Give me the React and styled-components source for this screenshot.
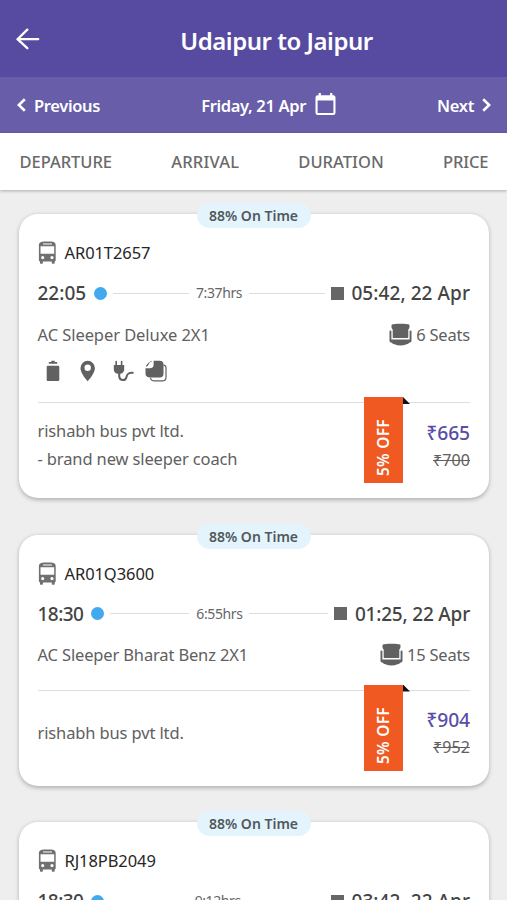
import React from "react";
import styled, { createGlobalStyle } from "styled-components";

const Global = createGlobalStyle`
  * { box-sizing: border-box; }
  html, body { margin: 0; background: #eeeeee; }
  body { font-family: "Noto Sans", "Open Sans", sans-serif; color: #606060; overflow: hidden; }
  svg { display: block; flex: none; }
`;

const Screen = styled.div`
  width: 100%;
  height: 900px;
  overflow: hidden;
  display: flex;
  flex-direction: column;
  background: #eeeeee;
`;

const Header = styled.header`
  flex: none;
  height: 77px;
  padding: 6px 17px 0 16px;
  display: grid;
  grid-template-columns: 24px 1fr;
  align-items: center;
  background: #564ba0;
  color: #fff;
`;

const BackButton = styled.button`
  width: 24px;
  height: 24px;
  margin-top: -6px;
  padding: 0;
  border: 0;
  background: none;
  color: inherit;
`;

const Title = styled.h1`
  margin: 0;
  padding: 0 0 1px 23px;
  text-align: center;
  font-size: 24px;
  font-weight: 600;
  line-height: 34px;
  letter-spacing: -0.48px;
`;

const DateBar = styled.nav`
  flex: none;
  height: 56px;
  padding: 0 16px 0 17px;
  display: flex;
  align-items: center;
  justify-content: space-between;
  background: #675da8;
  color: #fff;
  font-size: 16.5px;
  font-weight: 600;
  letter-spacing: -0.35px;
`;

const DateItem = styled.div`
  display: flex;
  align-items: center;
  gap: ${(p) => p.$gap}px;
  white-space: nowrap;
`;

const SortTabs = styled.nav`
  flex: none;
  height: 57px;
  padding: 0 18.5px 0 19.5px;
  display: flex;
  align-items: center;
  justify-content: space-between;
  background: #fff;
  box-shadow: 0 1px 3px rgba(0, 0, 0, 0.28);
  color: #6a6a6a;
`;

const SortTab = styled.span`
  font-size: 16.5px;
  font-weight: 500;
  letter-spacing: ${(p) => p.$tracking}px;
`;

const Results = styled.main`
  padding: 24px 18.5px 0;
  display: flex;
  flex-direction: column;
  gap: 36.5px;
`;

const Card = styled.article`
  position: relative;
  flex: none;
  padding: 26px 18.5px 0 19px;
  border-radius: 19px;
  background: #fff;
  box-shadow: 0 1.5px 4px rgba(0, 0, 0, 0.26);
`;

const OnTime = styled.span`
  position: absolute;
  top: -11px;
  left: 50%;
  transform: translateX(-50%);
  width: 114px;
  height: 25px;
  border-radius: 13px;
  background: #e4f4fd;
  color: #51585c;
  text-align: center;
  font-size: 14px;
  font-weight: 600;
  line-height: 26px;
`;

const Row = styled.div`
  display: flex;
  align-items: center;
  justify-content: space-between;
  white-space: nowrap;
`;

const BusRow = styled(Row)`
  height: 25px;
  justify-content: flex-start;
  gap: 8px;
  color: #262626;
  font-size: 16.5px;
  letter-spacing: -0.08px;
`;

const TimeRow = styled(Row)`
  height: 30px;
  margin-top: 13px;
`;

const Time = styled.span`
  color: #444;
  font-size: 19px;
  font-weight: 500;
  letter-spacing: ${(p) => p.$tracking}px;
`;

const StartDot = styled.i`
  flex: none;
  width: 13px;
  height: 13px;
  margin: 0 6px 0 8px;
  border-radius: 50%;
  background: #42a9ee;
`;

const EndSquare = styled.i`
  flex: none;
  width: 13px;
  height: 13px;
  margin: 0 7.5px 0 6px;
  background: #666;
`;

const Line = styled.i`
  flex: 1;
  height: 1px;
  background: #dedede;
`;

const Duration = styled.span`
  margin: -1px 7px 0 7px;
  font-size: 14px;
  letter-spacing: -0.4px;
  color: #666;
`;

const ClassRow = styled(Row)`
  height: 26px;
  margin-top: 13px;
  font-size: 16.5px;
`;

const ClassName = styled.span`
  letter-spacing: ${(p) => p.$tracking}px;
`;

const Seats = styled.span`
  display: flex;
  align-items: center;
  gap: 4px;
  letter-spacing: -0.2px;
`;

const Amenities = styled.div`
  height: 24px;
  margin-top: 12px;
  padding-left: 8px;
  display: flex;
  align-items: center;
  color: #616161;
`;

const AmenitySlot = styled.span`
  width: ${(p) => p.$w}px;
`;

const Footer = styled.footer`
  position: relative;
  height: 96px;
  margin-top: ${(p) => (p.$afterAmenities ? 19 : 22)}px;
  padding-bottom: 10px;
  display: flex;
  align-items: center;
  justify-content: space-between;
  border-top: 1px solid #dedede;
`;

const Operator = styled.div`
  margin-top: -1px;
  font-size: 16.5px;
  line-height: 28px;
  letter-spacing: -0.13px;
  white-space: pre-line;
`;

const Prices = styled.div`
  display: flex;
  flex-direction: column;
  align-items: flex-end;
  margin-top: 1px;
`;

const Price = styled.span`
  color: #594ea5;
  font-size: 19.3px;
  font-weight: 500;
  line-height: 28px;
  letter-spacing: -0.1px;
`;

const OldPrice = styled.span`
  font-size: 16px;
  line-height: 27px;
  letter-spacing: 0.1px;
  text-decoration: line-through;
`;

const Ribbon = styled.div`
  position: absolute;
  top: -6px;
  right: 67px;
  width: 39px;
  height: 86px;
  padding-top: 7px;
  display: flex;
  align-items: center;
  justify-content: flex-start;
  writing-mode: vertical-rl;
  transform: rotate(180deg);
  background: #f05a22;
  color: #fff;
  font-size: 15.5px;
  font-weight: 600;
  line-height: 39px;
  letter-spacing: 0.25px;
`;

const Fold = styled.i`
  position: absolute;
  top: -6px;
  right: 60px;
  width: 7px;
  height: 7px;
  background: #111;
  clip-path: polygon(0 0, 100% 100%, 0 100%);
`;

const BackArrow = () => (
  <svg width="24" height="24" viewBox="0 0 24 24" fill="none" stroke="currentColor" strokeWidth="2.3" strokeLinecap="round" strokeLinejoin="round">
    <path d="M22.200 12.200H1.600M11.300 2.600 1.500 12.200l9.800 9" />
  </svg>
);

const Chevron = ({ right }) => (
  <svg width="9" height="14" viewBox="0 0 9 14" fill="none" stroke="currentColor" strokeWidth="2.6">
    <path d={right ? "M1.2 1.2 7.2 7l-6 5.8" : "M7.8 1.2 1.8 7l6 5.8"} />
  </svg>
);

const Calendar = () => (
  <svg width="21" height="26" viewBox="0 0 21 26">
    <path fill="currentColor" fillRule="evenodd" d="M3.600 1h2.300v2.200h9.200V1h2.300v2.200h.9A2.200 2.200 0 0 1 20.500 5.400v15.400a2.200 2.200 0 0 1-2.200 2.200H2.700A2.200 2.200 0 0 1 .5 20.800V5.400a2.200 2.200 0 0 1 2.200-2.200h.9zM2.600 8.400v12.600h15.800V8.400z" />
  </svg>
);

const Bus = () => (
  <svg width="19" height="23" viewBox="0 0 19 23">
    <path fill="#707070" fillRule="evenodd" d="M.9 4.200C.9 1 4 .6 9.500.6s8.200.4 8.200 3.600v14.700c0 .8-.4 1.200-1 1.500v1.400c0 .6-.4 1-1 1h-.9c-.6 0-1-.4-1-1v-1.300H4.900v1.300c0 .6-.4 1-1 1H3c-.6 0-1-.4-1-1v-1.400c-.6-.3-1.100-.7-1.100-1.500zM2.500 5.200v7.600h13.700V5.200zM5 2.600v.8h9v-.8zM4.700 15a1.600 1.600 0 1 0 0 3.200 1.600 1.600 0 0 0 0-3.200m9.300 0a1.600 1.600 0 1 0 0 3.200 1.600 1.600 0 0 0 0-3.200" />
  </svg>
);

const Seat = () => (
  <svg width="23" height="23" viewBox="0 0 23 23">
    <path fill="#616161" d="M2.900 1.600C5 .3 18 .3 20.100 1.600c.8.700.6 4-.8 5v7.500c0 .7-.3 1-1 1H4.700c-.7 0-1-.3-1-1V6.600c-1.400-1-1.600-4.300-.8-5" />
    <path fill="#616161" d="M1.500 7.500c.6 0 .9.400.9 1v8h18.200v-8c0-.6.3-1 .9-1s1 .4 1 1v9.200c0 1.100-.7 1.500-1.700 1.900-2 1.900-5.200 2.800-9.300 2.800s-7.300-.9-9.300-2.800c-1-.4-1.700-.8-1.700-1.900V8.500c0-.6.400-1 1-1" />
  </svg>
);

const Bottle = () => (
  <svg width="14" height="22" viewBox="0 0 14 22" fill="currentColor">
    <path d="M5.300.8h3.400v1.300h2.500v1.700H2.800V2.100h2.500zM2 5.800h10c.8 0 1.300.5 1.300 1.300v12.700c0 .8-.5 1.300-1.300 1.300H2c-.8 0-1.300-.5-1.300-1.300V7.100c0-.8.5-1.300 1.300-1.300" />
  </svg>
);

const Pin = () => (
  <svg width="16" height="22" viewBox="0 0 16 22">
    <path fill="currentColor" fillRule="evenodd" d="M7.700.8A7.200 7.200 0 0 0 .5 8c0 4 3.400 8.900 7.200 13.200 3.800-4.300 7.200-9.200 7.200-13.200A7.200 7.200 0 0 0 7.700.8m0 3.800a3.200 3.200 0 1 0 0 6.400 3.200 3.200 0 0 0 0-6.400" />
  </svg>
);

const Plug = () => (
  <svg width="21" height="22" viewBox="0 0 21 22">
    <path fill="currentColor" d="M2.400 1.500c0-.9 1.600-.9 1.600 0V5h3.800V1.500c0-.9 1.600-.9 1.600 0V5h1.800v4.500c0 2.300-1.600 3.800-3.500 4.200H4.500C2.200 13.200.8 11.700.8 9.500V5h1.600z" />
    <path fill="none" stroke="currentColor" strokeWidth="2" strokeLinecap="round" d="M6.200 13v3c0 5 6.300 5.400 7.200 1.200.7-3.200 1.800-4.700 6.400-4.500" />
  </svg>
);

const Blanket = () => (
  <svg width="22" height="22" viewBox="0 0 22 22">
    <path fill="none" stroke="currentColor" strokeWidth="1.200" d="M18.500 5.200c1.500.2 2.500 1 2.500 2.500v9.500c0 2.500-1.200 3.700-3.700 3.700H9.500c-2.500 0-3.700-.8-4-3.200" />
    <path fill="currentColor" d="M8.600.8h6.200c2.500 0 3.700 1.200 3.700 3.700v9.300c0 2.500-1.200 3.700-3.700 3.700H5C2.500 17.500.5 16.300.5 13.800V8.200h4.300c2.700 0 3.800-1.200 3.800-3.200z" />
    <path fill="currentColor" d="M.7 6.800C1.500 4 4.200 1.500 7.100.9c.2 1-2 .5-3 2.500-.8 1.600-1.600 3-3.400 3.400" />
  </svg>
);

const trips = [
  { bus: "AR01T2657", start: "22:05", startTracking: 0, duration: "7:37hrs", end: "05:42, 22 Apr", endTracking: 0.07, type: "AC Sleeper Deluxe 2X1", tracking: -0.07, seats: "6 Seats", amenities: true, operator: "rishabh bus pvt ltd.\n- brand new sleeper coach", price: "₹665", old: "₹700" },
  { bus: "AR01Q3600", start: "18:30", startTracking: -0.55, duration: "6:55hrs", end: "01:25, 22 Apr", endTracking: -0.2, type: "AC Sleeper Bharat Benz 2X1", tracking: -0.15, seats: "15 Seats", operator: "rishabh bus pvt ltd.", price: "₹904", old: "₹952" },
  { bus: "RJ18PB2049", start: "18:30", startTracking: -0.55, duration: "9:12hrs", end: "03:42, 22 Apr", endTracking: 0.06, type: "AC Sleeper 2X1", tracking: -0.07, seats: "12 Seats", operator: "rishabh bus pvt ltd.", price: "₹904", old: "₹952" },
];

const TripCard = ({ trip }) => (
  <Card>
    <OnTime>88% On Time</OnTime>
    <BusRow><Bus />{trip.bus}</BusRow>
    <TimeRow>
      <Time $tracking={trip.startTracking}>{trip.start}</Time>
      <StartDot />
      <Line />
      <Duration>{trip.duration}</Duration>
      <Line />
      <EndSquare />
      <Time $tracking={trip.endTracking}>{trip.end}</Time>
    </TimeRow>
    <ClassRow>
      <ClassName $tracking={trip.tracking}>{trip.type}</ClassName>
      <Seats><Seat />{trip.seats}</Seats>
    </ClassRow>
    {trip.amenities && (
      <Amenities>
        <AmenitySlot $w={34}><Bottle /></AmenitySlot>
        <AmenitySlot $w={33}><Pin /></AmenitySlot>
        <AmenitySlot $w={32.5}><Plug /></AmenitySlot>
        <AmenitySlot $w={22}><Blanket /></AmenitySlot>
      </Amenities>
    )}
    <Footer $afterAmenities={trip.amenities}>
      <Operator>{trip.operator}</Operator>
      <Ribbon>5% OFF</Ribbon>
      <Fold />
      <Prices>
        <Price>{trip.price}</Price>
        <OldPrice>{trip.old}</OldPrice>
      </Prices>
    </Footer>
  </Card>
);

export default function App() {
  return (
    <Screen>
      <Global />
      <Header>
        <BackButton aria-label="Back"><BackArrow /></BackButton>
        <Title>Udaipur to Jaipur</Title>
      </Header>
      <DateBar>
        <DateItem $gap={8}><Chevron />Previous</DateItem>
        <DateItem $gap={9}>Friday, 21 Apr<Calendar /></DateItem>
        <DateItem $gap={8}>Next<Chevron right /></DateItem>
      </DateBar>
      <SortTabs>
        <SortTab $tracking={-0.03}>DEPARTURE</SortTab>
        <SortTab $tracking={0.2}>ARRIVAL</SortTab>
        <SortTab $tracking={0.05}>DURATION</SortTab>
        <SortTab $tracking={-0.1}>PRICE</SortTab>
      </SortTabs>
      <Results>
        {trips.map((trip) => <TripCard key={trip.bus} trip={trip} />)}
      </Results>
    </Screen>
  );
}
